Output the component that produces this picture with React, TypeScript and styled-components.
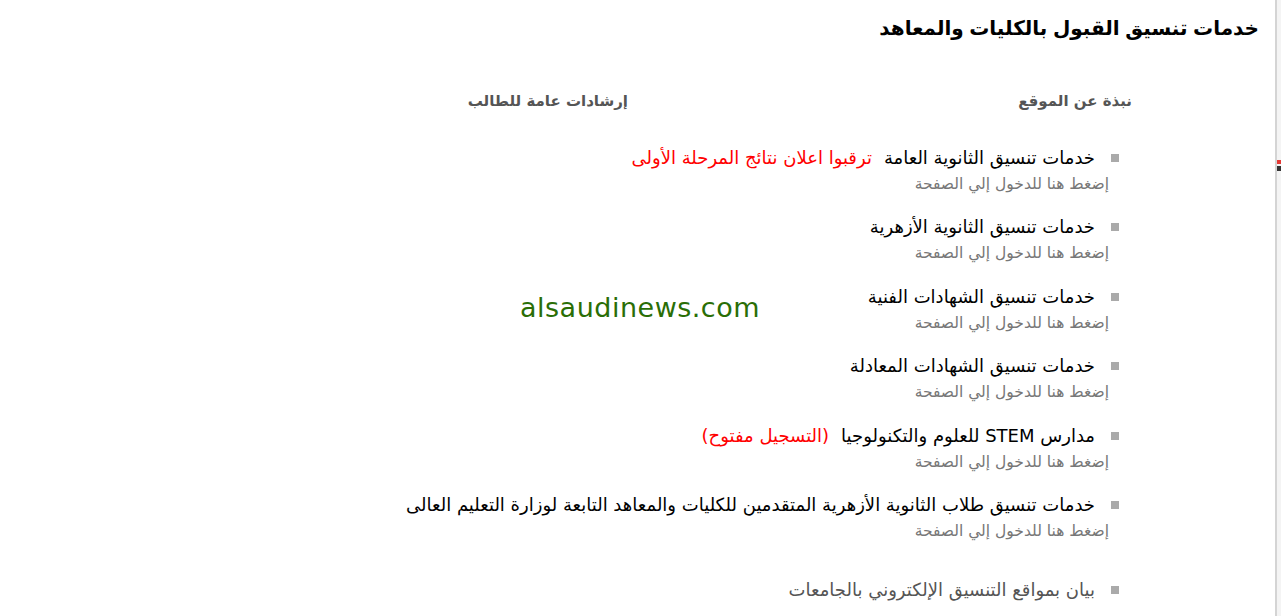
import React from "react";
import styled, { createGlobalStyle } from "styled-components";

const GlobalStyle = createGlobalStyle`
  html, body {
    margin: 0;
    padding: 0;
    background: #fff;
  }
  body {
    font-family: "DejaVu Sans", "Noto Sans", sans-serif;
    overflow: hidden;
  }
`;

const Page = styled.div`
  display: flex;
  width: 1281px;
  height: 616px;
  position: relative;
  overflow: hidden;
`;

const Main = styled.main`
  flex: 1;
  direction: rtl;
  padding: 11px 16px 0 0;
  box-sizing: border-box;
  overflow: hidden;
`;

const Edge = styled.div`
  width: 4px;
  border-left: 2px solid #d4d4d4;
  background: #f4f4f4;
  display: flex;
  flex-direction: column;
  padding-top: 160px;
  gap: 2px;
`;

const Mark = styled.span<{ $color: string; $h: number }>`
  display: block;
  height: ${(p) => p.$h}px;
  background: ${(p) => p.$color};
`;

const Title = styled.h1`
  margin: 0;
  font-family: "Liberation Sans", "DejaVu Sans", sans-serif;
  font-size: 20px;
  font-weight: bold;
  line-height: 34px;
  color: #000;
`;

const Tabs = styled.nav`
  display: flex;
  margin: 45px 127px 0 0;
`;

const Tab = styled.a`
  width: 504px;
  font-size: 15px;
  font-weight: bold;
  color: #555;
  line-height: 22px;
  text-decoration: none;
`;

const List = styled.ul`
  list-style: none;
  margin: 33px 140px 0 0;
  padding: 0;
`;

const Item = styled.li<{ $gap?: number }>`
  margin-top: ${(p) => p.$gap ?? 0}px;
  min-height: 69.4px;
`;

const Row = styled.div`
  display: flex;
  align-items: center;
  gap: 16px;
  line-height: 26px;
`;

const Bullet = styled.span`
  width: 8px;
  height: 8px;
  background: #aaa;
  flex: none;
`;

const ItemTitle = styled.span<{ $muted?: boolean }>`
  font-size: 18px;
  color: ${(p) => (p.$muted ? "#555" : "#000")};
`;

const Note = styled.span`
  color: #f00;
  margin-right: 12px;
`;

const Sub = styled.a`
  display: block;
  margin-right: 10px;
  font-size: 15.5px;
  line-height: 26px;
  color: #777;
  text-decoration: none;
`;

const Watermark = styled.div`
  position: absolute;
  left: 520px;
  top: 292px;
  font-family: "DejaVu Sans", sans-serif;
  font-size: 27px;
  color: #2a6e06;
  letter-spacing: 0.5px;
  pointer-events: none;
`;

const items: { title: string; note?: string }[] = [
  { title: "خدمات تنسيق الثانوية العامة", note: "ترقبوا اعلان نتائج المرحلة الأولى" },
  { title: "خدمات تنسيق الثانوية الأزهرية" },
  { title: "خدمات تنسيق الشهادات الفنية" },
  { title: "خدمات تنسيق الشهادات المعادلة" },
  { title: "مدارس STEM للعلوم والتكنولوجيا", note: "(التسجيل مفتوح)" },
  { title: "خدمات تنسيق طلاب الثانوية الأزهرية المتقدمين للكليات والمعاهد التابعة لوزارة التعليم العالى" },
];

export default function App() {
  return (
    <>
      <GlobalStyle />
      <Page>
        <Main>
          <Title>خدمات تنسيق القبول بالكليات والمعاهد</Title>
          <Tabs>
            <Tab href="#">نبذة عن الموقع</Tab>
            <Tab href="#">إرشادات عامة للطالب</Tab>
          </Tabs>
          <List>
            {items.map((it) => (
              <Item key={it.title}>
                <Row>
                  <Bullet />
                  <ItemTitle>
                    {it.title}
                    {it.note && <Note>{it.note}</Note>}
                  </ItemTitle>
                </Row>
                <Sub href="#">إضغط هنا للدخول إلي الصفحة</Sub>
              </Item>
            ))}
            <Item $gap={16}>
              <Row>
                <Bullet />
                <ItemTitle $muted>بيان بمواقع التنسيق الإلكتروني بالجامعات</ItemTitle>
              </Row>
            </Item>
          </List>
        </Main>
        <Edge>
          <Mark $color="#e53935" $h={4} />
          <Mark $color="#333" $h={5} />
        </Edge>
        <Watermark>alsaudinews.com</Watermark>
      </Page>
    </>
  );
}
